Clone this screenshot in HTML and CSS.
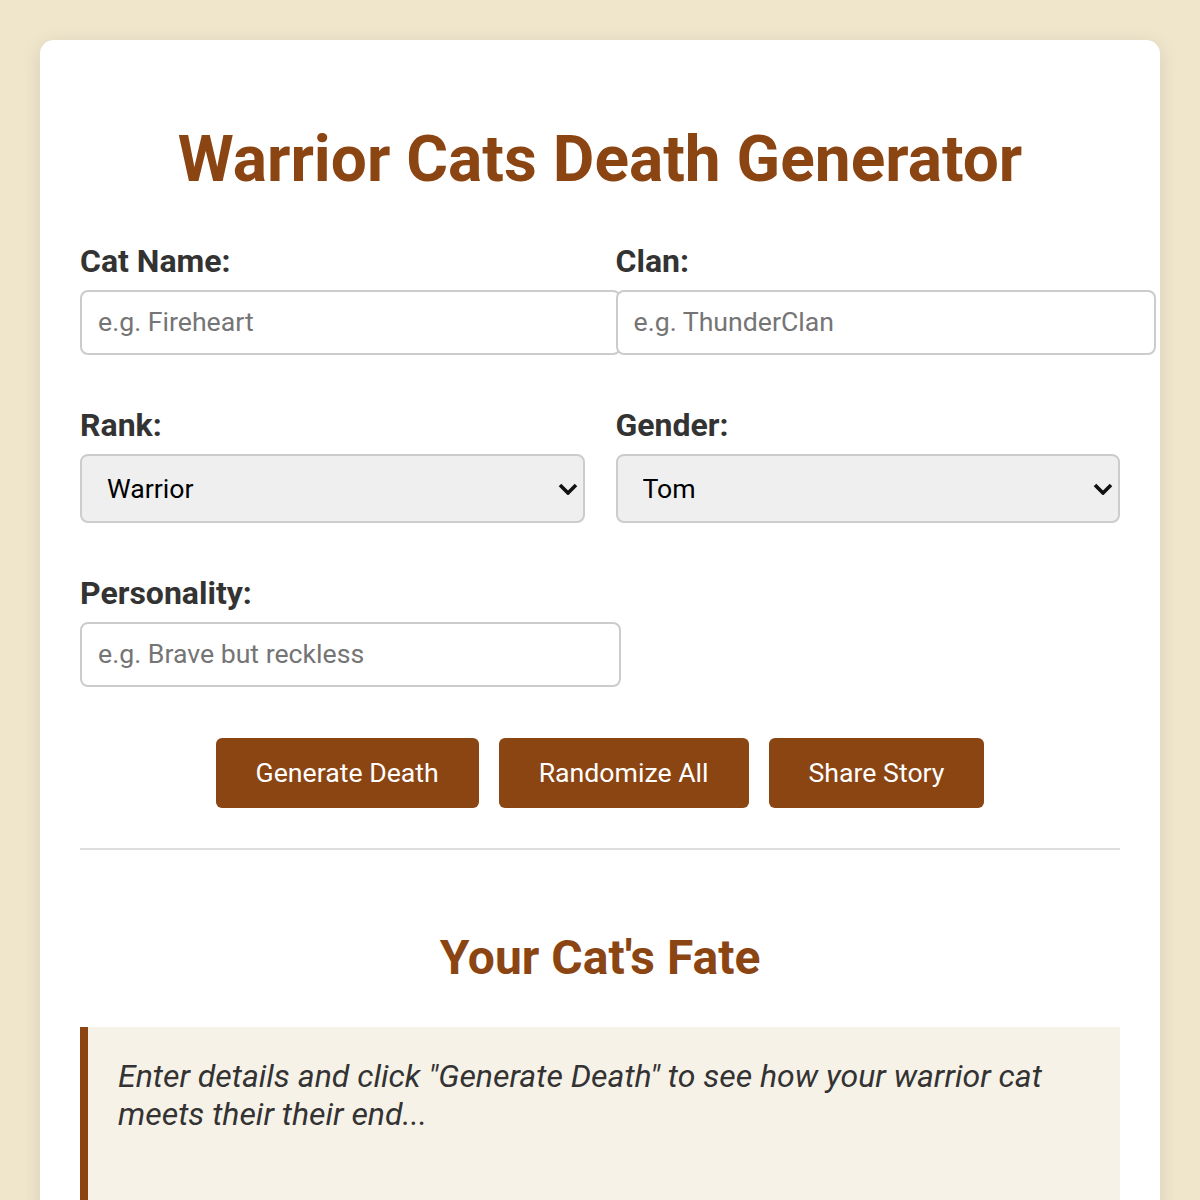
FILE: index.html
```html
<!DOCTYPE html>
<html lang="en">
<head>
  <meta charset="UTF-8">
  <title>Warrior Cats Death Generator</title>
  <link rel="stylesheet" href="styles.css">
</head>
<body>

  <div class="container">
    <h1>Warrior Cats Death Generator</h1>

    <div class="form-grid">
      <div class="form-group">
        <label for="cat-name">Cat Name:</label>
        <input type="text" id="cat-name" placeholder="e.g. Fireheart">
      </div>
      <div class="form-group">
        <label for="clan">Clan:</label>
        <input type="text" id="clan" placeholder="e.g. ThunderClan">
      </div>
      <div class="form-group">
        <label for="rank">Rank:</label>
        <div class="select-wrap">
          <select id="rank">
            <option>Warrior</option>
            <option>Apprentice</option>
            <option>Deputy</option>
            <option>Leader</option>
            <option>Medicine Cat</option>
            <option>Elder</option>
            <option>Kit</option>
          </select>
          <svg class="chevron" width="20" height="12" viewBox="0 0 20 12"><path d="M2 2 L10 10 L18 2" fill="none" stroke="#111" stroke-width="3.6"/></svg>
        </div>
      </div>
      <div class="form-group">
        <label for="gender">Gender:</label>
        <div class="select-wrap">
          <select id="gender">
            <option>Tom</option>
            <option>She-cat</option>
          </select>
          <svg class="chevron" width="20" height="12" viewBox="0 0 20 12"><path d="M2 2 L10 10 L18 2" fill="none" stroke="#111" stroke-width="3.6"/></svg>
        </div>
      </div>
      <div class="form-group">
        <label for="personality">Personality:</label>
        <input type="text" id="personality" placeholder="e.g. Brave but reckless">
      </div>
    </div>

    <div class="buttons">
      <button class="btn">Generate Death</button>
      <button class="btn">Randomize All</button>
      <button class="btn">Share Story</button>
    </div>

    <hr>

    <h2>Your Cat's Fate</h2>
    <div class="result">
      <p>Enter details and click "Generate Death" to see how your warrior cat meets their their end...</p>
    </div>
  </div>

</body>
</html>
```

FILE: styles.css
```css
body {
  margin: 0;
  padding: 40px;
  font-family: 'Roboto', 'Liberation Sans', sans-serif;
  font-size: 26.67px;
  background-color: #f0e6cc;
  color: #333;
}

.container {
  background: white;
  padding: 40px;
  border-radius: 14px;
  box-shadow: 0 4px 20px rgba(0,0,0,0.1);
}

h1 {
  color: #8b4513;
  text-align: center;
  font-size: 64px;
  line-height: 75px;
  margin: 42px 0 45px 0;
}

.form-grid {
  display: grid;
  grid-template-columns: 1fr 1fr;
  column-gap: 31px;
  row-gap: 51px;
}

.form-group label {
  display: block;
  font-weight: bold;
  font-size: 32px;
  line-height: 38px;
  margin-bottom: 10px;
}

.form-group input {
  width: 100%;
  padding: 15px 16px;
  font-family: inherit;
  font-size: 26.67px;
  line-height: 31px;
  border: 2px solid #ccc;
  border-radius: 8px;
  color: #333;
}

.form-group input::placeholder {
  color: #757575;
}

.select-wrap {
  position: relative;
  margin-top: 1px;
}

.select-wrap select {
  display: block;
  width: 100%;
  height: 69px;
  padding: 0 40px 0 25px;
  appearance: none;
  font-family: inherit;
  font-size: 26.67px;
  color: black;
  background-color: #efefef;
  border: 2px solid #ccc;
  border-radius: 8px;
}

.chevron {
  position: absolute;
  right: 7px;
  top: 50%;
  transform: translateY(-50%);
  pointer-events: none;
}

.buttons {
  display: flex;
  justify-content: center;
  gap: 20px;
  margin-top: 51px;
}

.btn {
  padding: 19px 40px;
  background-color: #8b4513;
  color: white;
  border: none;
  border-radius: 6px;
  font-family: inherit;
  font-size: 26.67px;
  line-height: 32px;
  cursor: pointer;
}

.btn:hover {
  background-color: #6e3610;
}

hr {
  border: none;
  border-top: 2px solid #ddd;
  margin: 40px 0;
}

h2 {
  color: #8b4513;
  text-align: center;
  font-size: 48px;
  line-height: 56px;
  margin: 80px 0 41px 0;
}

.result {
  background-color: #f7f2e8;
  border-left: 8px solid #8b4513;
  padding: 30px;
  min-height: 160px;
}

.result p {
  margin: 0;
  font-style: italic;
  font-size: 32px;
  line-height: 38px;
  color: #333;
}
```
